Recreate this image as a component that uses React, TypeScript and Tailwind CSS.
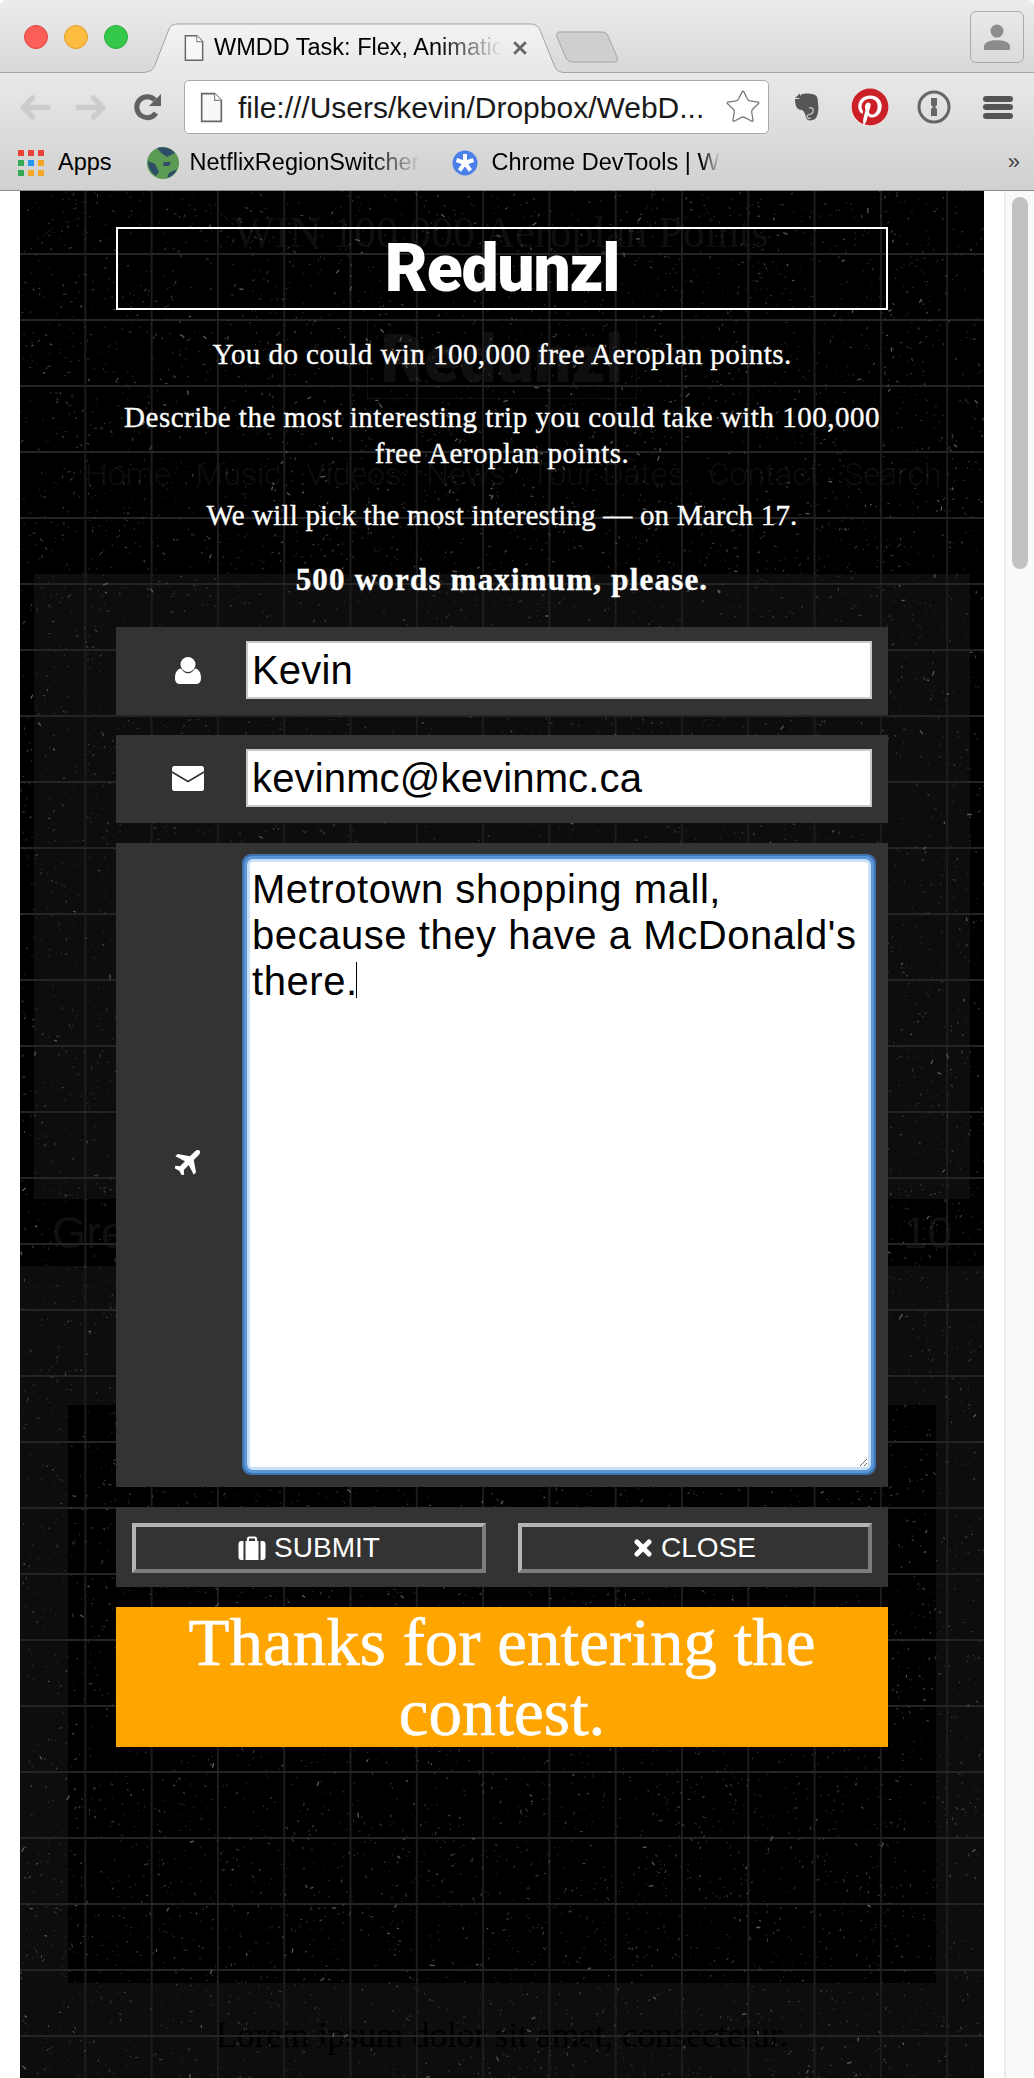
import { Star } from "lucide-react";
import { FaPinterest } from "react-icons/fa";

// speckle texture for the dark page background
function makeSpeckles(seed: number, count: number, maxLen: number) {
  let s = seed;
  const rand = () => {
    s = (s * 1664525 + 1013904223) % 4294967296;
    return s / 4294967296;
  };
  let d = "";
  for (let i = 0; i < count; i++) {
    const x = rand() * 964;
    const y = rand() * 1888;
    const len = rand() * maxLen + 0.2;
    const a = rand() * 6.28;
    d += `M${x.toFixed(1)} ${y.toFixed(1)}l${(Math.cos(a) * len).toFixed(1)} ${(Math.sin(a) * len).toFixed(1)}`;
  }
  return d;
}

const speckA = makeSpeckles(11, 8500, 1.2);
const speckB = makeSpeckles(29, 3800, 2.2);
const speckC = makeSpeckles(47, 500, 4);

function DocIcon({ className }: { className: string }) {
  return (
    <svg viewBox="0 0 22 30" className={className}>
      <path d="M1.5 1.5H14L20.5 8V28.5H1.5Z" fill="#f8f8f8" stroke="#666" strokeWidth="1.6" />
      <path d="M14 1.5V8H20.5" fill="#fff" stroke="#888" strokeWidth="1.2" />
    </svg>
  );
}

function Chrome() {
  return (
    <div className="bg-white">
      <div className="h-[73px] flex items-end rounded-t-[6px] border-b border-[#a3a3a3] bg-[linear-gradient(#ececec,#d8d8d8)]">
        <div className="flex gap-[16px] ml-[24px] mb-[23px]">
          <div className="size-[24px] rounded-full bg-[#fc5f58] border border-[#e2463f]" />
          <div className="size-[24px] rounded-full bg-[#fdbc40] border border-[#e09e2c]" />
          <div className="size-[24px] rounded-full bg-[#34c84a] border border-[#2dac3e]" />
        </div>
        <div className="relative ml-[17px] w-[417px] h-[50px] -mb-px flex items-center">
          <svg viewBox="0 0 417 50" className="absolute inset-0 w-full h-full">
            <defs>
              <linearGradient id="tabFill" x1="0" y1="0" x2="0" y2="1">
                <stop offset="0" stopColor="#f3f3f3" />
                <stop offset="1" stopColor="#e8e8e8" />
              </linearGradient>
            </defs>
            <path
              d="M0 49C5 49 8 47 10 42L24 6C26 2 29 1 34 1H385C390 1 393 3 395 7L409 42C411 47 413 49 417 49V50H0Z"
              fill="url(#tabFill)"
            />
            <path
              d="M0 49C5 49 8 47 10 42L24 6C26 2 29 1 34 1H385C390 1 393 3 395 7L409 42C411 47 413 49 417 49"
              fill="none"
              stroke="#a3a3a3"
              strokeWidth="1"
            />
          </svg>
          <DocIcon className="relative ml-[39px] w-[20px] h-[28px]" />
          <span className="relative ml-[10px] w-[294px] overflow-hidden whitespace-nowrap text-[23.500px] text-black [mask-image:linear-gradient(90deg,#000_76%,transparent_98%)]">
            WMDD Task: Flex, Animation
          </span>
          <svg viewBox="0 0 12 12" className="relative ml-[5px] size-[14px]">
            <path d="M1 1L11 11M11 1L1 11" stroke="#666" strokeWidth="2.4" />
          </svg>
        </div>
        <svg viewBox="0 0 64 32" className="w-[64px] h-[32px] -ml-[7px] mb-[9px]">
          <path
            d="M5 1H47C50 1 52 2 53 5L62 26C63 29 62 31 59 31H18C15 31 13 30 11 27L2 6C1 3 2 1 5 1Z"
            fill="#cfcfcf"
            stroke="#a3a3a3"
          />
        </svg>
        <div className="ml-auto mr-[10px] mb-[9px] w-[54px] h-[52px] rounded-[6px] border border-[#aaa] flex items-center justify-center">
          <svg viewBox="0 0 24 24" className="size-[26px]" fill="#8c8c8c">
            <circle cx="12" cy="6.5" r="6" />
            <path d="M0 24V21C0 16.5 6 15 12 15S24 16.5 24 21V24Z" />
          </svg>
        </div>
      </div>

      <div className="bg-[linear-gradient(#e9e9e9,#d0d0d0)] border-b border-[#8a8a8a]">
        <div className="h-[71px] pb-[3px] pl-[20px] flex items-center">
          <svg viewBox="0 0 32 26" className="w-[31px] h-[25px]" fill="none" stroke="#cccccc" strokeWidth="5.5" strokeLinecap="round" strokeLinejoin="round">
            <path d="M29 13H4M13 3L3 13L13 23" />
          </svg>
          <svg viewBox="0 0 32 26" className="ml-[24px] w-[31px] h-[25px]" fill="none" stroke="#cccccc" strokeWidth="5.5" strokeLinecap="round" strokeLinejoin="round">
            <path d="M3 13H28M19 3L29 13L19 23" />
          </svg>
          <svg viewBox="0 0 28 28" className="ml-[28px] w-[28px] h-[28px]">
            <path d="M22 20A10.5 10.5 0 1 1 21 7" fill="none" stroke="#616161" strokeWidth="5" />
            <path d="M27 1V13H15Z" fill="#616161" />
          </svg>
          <div className="ml-[22px] w-[585px] h-[54px] bg-white border border-[#a9a9a9] rounded-[5px] flex items-center pl-[15px]">
            <DocIcon className="w-[23px] h-[31px]" />
            <span className="ml-[15px] text-[30px] text-[#1a1a1a] whitespace-nowrap">
              file:///Users/kevin/Dropbox/WebD...
            </span>
            <Star className="ml-auto mr-[6px] size-[38px] text-[#777] fill-white" strokeWidth={0.8} />
          </div>
          <svg viewBox="0 0 25 28" className="ml-[25px] w-[25px] h-[28px]">
            <path
              d="M5 6L7 1.500C11 0 16 0.500 20 1.500C23 2.500 24 5 24 10C25 17 24 23 21 26C18 28 13 28 12 25C11.500 22 11 19 8 17C3 17 1 13 1 6Z"
              fill="#565656"
            />
            <path d="M1 5L6 0.500V5Z" fill="#555" />
            <path d="M15 15C18 14 20 16 19 19C18 22 14 21 13 23C12.500 25 15 26 17 25" fill="none" stroke="#cfcfcf" strokeWidth="1.200" />
          </svg>
          <span className="ml-[32px] size-[37px] rounded-full bg-white flex items-center justify-center">
            <FaPinterest className="size-[38px] shrink-0 text-[#cb2027]" />
          </span>
          <svg viewBox="0 0 34 34" className="ml-[29px] size-[34px]">
            <circle cx="17" cy="17" r="15" fill="none" stroke="#666" strokeWidth="3" />
            <path d="M14 8H20V15L18 17L20 19V26H14V19L16 17L14 15Z" fill="#666" />
          </svg>
          <div className="ml-[32px] w-[30px] flex flex-col gap-[2.500px]">
            <div className="h-[6px] rounded-[3px] bg-[#555]" />
            <div className="h-[6px] rounded-[3px] bg-[#555]" />
            <div className="h-[6px] rounded-[3px] bg-[#555]" />
          </div>
        </div>

        <div className="h-[46px] pb-[8px] pl-[18px] flex items-center text-[23.500px] text-black whitespace-nowrap">
          <div className="grid grid-cols-3 gap-[4px] w-[26px]">
            {["#ea4335", "#ea4335", "#ea4335", "#34a853", "#2196f3", "#f5a623", "#34a853", "#f5a623", "#f5a623"].map((c, i) => (
              <svg key={i} viewBox="0 0 6 6" className="size-[6px]">
                <rect width="6" height="6" fill={c} />
              </svg>
            ))}
          </div>
          <span className="ml-[14px]">Apps</span>
          <svg viewBox="0 0 32 32" className="ml-[35px] size-[32px]">
            <circle cx="16" cy="16" r="16" fill="#5b9a52" />
            <path d="M10 1C16-1 24 1 28 6L20 10L14 6ZM1 14L8 17L12 25L9 29C4 26 1 20 1 14ZM17 15H24L22 19H16ZM22 26L30 22C28 27 24 30 20 31Z" fill="#2f4d69" />
          </svg>
          <span className="ml-[11px] w-[231px] overflow-hidden [mask-image:linear-gradient(90deg,#000_78%,transparent)]">
            NetflixRegionSwitcher
          </span>
          <svg viewBox="0 0 28 28" className="ml-[30px] size-[28px]">
            <circle cx="14" cy="14" r="12.500" fill="#4a80e8" />
            <path d="M14 5V14M14 14L22.500 11M14 14L19.500 21.500M14 14L8.500 21.500M14 14L5.500 11" stroke="#fff" strokeWidth="4" />
          </svg>
          <span className="ml-[13px] w-[228px] overflow-hidden [mask-image:linear-gradient(90deg,#000_92%,transparent)]">
            Chrome DevTools | WMDD
          </span>
          <span className="ml-auto mr-[14px] text-[#444] text-[22px] -mt-[4px]">»</span>
        </div>
      </div>
    </div>
  );
}

// what shows faintly behind the modal: the dimmed page and its texture
function Backdrop() {
  return (
    <div className="absolute inset-0 overflow-hidden">
      <div className="flex flex-col h-full font-['Liberation_Serif',serif]">
        <div className="h-[383px] bg-black text-[#0f0f0f]">
          <div className="pl-[213px] pt-[10px] text-[44px] leading-[64px] whitespace-nowrap">WIN 100 000 Aeroplan Points</div>
          <div className="ml-[347px] mt-[54px] w-[270px] h-[80px] border border-[#101010] flex items-center justify-center font-['Roboto',sans-serif] font-black text-[66px]">
            Redunzl
          </div>
          <div className="mt-[52px] pl-[65px] flex gap-[25px] text-[32px] leading-[46px] font-['Roboto',sans-serif] font-light whitespace-nowrap">
            <span>Home</span>
            <span>Music</span>
            <span>Videos</span>
            <span>News</span>
            <span>Tour Dates</span>
            <span>Contact</span>
            <span>Search</span>
          </div>
        </div>
        <div className="h-[625px] bg-black">
          <div className="mx-[14px] h-full bg-[#0d0d0d]" />
        </div>
        <div className="h-[67px] bg-black flex justify-between items-center px-[32px] text-[#101010] text-[44px] font-['Liberation_Sans',sans-serif]">
          <span>Greg</span>
          <span>10</span>
        </div>
        <div className="h-[139px] bg-[#0d0d0d]" />
        <div className="h-[578px] bg-[#0d0d0d] px-[48px]">
          <div className="h-full bg-black" />
        </div>
        <div className="flex-1 bg-[#0d0d0d] pt-[33px] text-center text-black text-[35px] leading-[40px]">
          Lorem ipsum dolor sit amet, consectetur.
        </div>
      </div>
      <div className="absolute inset-0 blur-[0.500px]">
        <div className="absolute inset-0 bg-[linear-gradient(90deg,transparent_64px,#1c1c1c_64px,#1c1c1c_66px)] bg-[length:66.300px_100%]" />
        <div className="absolute inset-0 bg-[linear-gradient(180deg,transparent_62px,#242424_62px,#242424_64px,transparent_64px)] bg-[length:100%_66px]" />
        <svg viewBox="0 0 964 1888" className="absolute inset-0 w-full h-full" fill="none" strokeLinecap="round">
          <path d={speckA} stroke="#303030" strokeWidth="1" />
          <path d={speckB} stroke="#404040" strokeWidth="1.100" />
          <path d={speckC} stroke="#5a5a5a" strokeWidth="1.300" />
        </svg>
      </div>
    </div>
  );
}

function UserIcon() {
  return (
    <svg viewBox="0 0 26 27" className="w-[26px] h-[27px]" fill="#fff">
      <circle cx="13" cy="7.500" r="7.500" />
      <path d="M0 21C0 15 2.500 12 6 11.500C8 14.500 10 16.200 13 16.200C16 16.200 18 14.500 20 11.500C23.500 12 26 15 26 21C26 25 24 27 21 27H5C2 27 0 25 0 21Z" />
    </svg>
  );
}

function MailIcon() {
  return (
    <svg viewBox="0 0 32 25" className="w-[32px] h-[25px]">
      <rect width="32" height="25" rx="2.500" fill="#fff" />
      <path d="M0 6L16 15.500L32 6" fill="none" stroke="#333" strokeWidth="1.600" />
    </svg>
  );
}

function PlaneIcon() {
  return (
    <svg viewBox="0 0 24 24" className="size-[26px]" fill="#fff">
      <path
        transform="rotate(45 12 12)"
        d="M12 -3C13.500 -3 14.500 -1 14.500 1V7L24 13.500V16.500L14.500 13.500V20L17.500 22.500V25L12 23.500L6.500 25V22.500L9.500 20V13.500L0 16.500V13.500L9.500 7V1C9.500 -1 10.500 -3 12 -3Z"
      />
    </svg>
  );
}

function SuitcaseIcon() {
  return (
    <svg viewBox="0 0 28 24" className="w-[28px] h-[24px]" fill="#fff">
      <path d="M9 5V2.500C9 1.500 10 0.500 11 0.500H17C18 0.500 19 1.500 19 2.500V5H17V2.500H11V5Z" />
      <rect x="7.500" y="5" width="13" height="19" />
      <path d="M5.500 5V24H3.500C1.500 24 0.500 23 0.500 21V8C0.500 6 1.500 5 3.500 5ZM22.500 5H24.500C26.500 5 27.500 6 27.500 8V21C27.500 23 26.500 24 24.500 24H22.500Z" />
    </svg>
  );
}

function Modal() {
  return (
    <div className="relative pt-[36px] px-[96px] font-['Liberation_Serif',serif] text-white text-center">
      <h1 className="h-[83px] border-2 border-white flex items-center justify-center font-['Roboto',sans-serif] font-black text-[66px] tracking-[-1.200px]">
        Redunzl
      </h1>
      <div className="[-webkit-text-stroke:0.350px_white]">
        <p className="mt-[26px] text-[29px] leading-[36px] tracking-[0.450px] whitespace-nowrap">You do could win 100,000 free Aeroplan points.</p>
        <p className="mt-[27px] -mx-[4px] text-[29px] leading-[36px] tracking-[0.500px]">
          Describe the most interesting trip you could take with 100,000
          <br />
          free Aeroplan points.
        </p>
        <p className="mt-[26px] text-[29px] leading-[36px] tracking-[0.180px]">We will pick the most interesting — on March 17.</p>
        <p className="mt-[29px] text-[31px] leading-[36px] tracking-[1.200px] font-bold">500 words maximum, please.</p>
      </div>

      <div className="font-['Liberation_Sans',sans-serif]">
        <div className="mt-[29px] h-[88px] bg-[#333] flex items-center pr-[16px] pb-[2px]">
          <div className="w-[130px] pl-[14px] flex justify-center">
            <UserIcon />
          </div>
          <input
            readOnly
            defaultValue="Kevin"
            className="flex-1 h-[58px] bg-white border-2 border-[#c9c9c9] pl-[4px] text-[40px] tracking-[0.150px] text-black"
          />
        </div>
        <div className="mt-[20px] h-[88px] bg-[#333] flex items-center pr-[16px] pb-[2px]">
          <div className="w-[130px] pl-[14px] flex justify-center">
            <MailIcon />
          </div>
          <input
            readOnly
            defaultValue="kevinmc@kevinmc.ca"
            className="flex-1 h-[58px] bg-white border-2 border-[#c9c9c9] pl-[4px] text-[40px] tracking-[0.150px] text-black"
          />
        </div>
        <div className="mt-[20px] h-[644px] bg-[#333] flex items-center pt-[19px] pb-[20px] pr-[20px]">
          <div className="w-[134px] pl-[10px] pb-[6px] flex justify-center">
            <PlaneIcon />
          </div>
          <div className="relative flex-1 h-full">
            <textarea
              readOnly
              defaultValue="Metrotown shopping mall, because they have a McDonald's there."
              className="block w-full h-full resize bg-white rounded-[3px] pl-[2px] pt-[4px] text-[40px] leading-[46px] tracking-[0.550px] text-black shadow-[0_0_0_3px_#c8e0f8,0_0_0_6px_#5b96d6,0_0_0_8px_#3d72b0] outline-none"
            />
            <div className="absolute left-[106px] top-[100px] w-px h-[36px] bg-black" />
          </div>
        </div>
        <div className="mt-[20px] h-[80px] bg-[#333] pt-[16px] px-[16px] flex gap-[32px] text-white text-[28px]">
          <button className="flex-1 h-[50px] flex items-center justify-center gap-[8px] bg-[#333] border-4 border-t-[#b4b4b4] border-l-[#b4b4b4] border-b-[#7c7c7c] border-r-[#7c7c7c]">
            <SuitcaseIcon />
            SUBMIT
          </button>
          <button className="flex-1 h-[50px] flex items-center justify-center gap-[9px] bg-[#333] border-4 border-t-[#b4b4b4] border-l-[#b4b4b4] border-b-[#7c7c7c] border-r-[#7c7c7c]">
            <svg viewBox="0 0 18 18" className="size-[18px]">
              <path d="M3 3L15 15M15 3L3 15" stroke="#fff" strokeWidth="5" strokeLinecap="round" />
            </svg>
            CLOSE
          </button>
        </div>
      </div>

      <div className="mt-[20px] h-[140px] bg-[#ffa500] text-[67px] leading-[70px] [-webkit-text-stroke:0.600px_white]">Thanks for entering the contest.</div>
    </div>
  );
}

export default function App() {
  return (
    <div className="w-[1034px] h-[2078px] overflow-hidden bg-white font-['Liberation_Sans',sans-serif]">
      <Chrome />
      <div className="flex h-[1888px]">
        <div className="w-[20px] bg-white" />
        <main className="relative w-[964px] h-full">
          <Backdrop />
          <Modal />
        </main>
        <div className="w-[20px] bg-white" />
        <div className="flex-1 bg-[#f9f9f9] border-l-2 border-[#ebebeb] pl-[6px] pt-[6px]">
          <div className="w-[16px] h-[372px] rounded-[8px] bg-[#c2c2c2]" />
        </div>
      </div>
    </div>
  );
}
